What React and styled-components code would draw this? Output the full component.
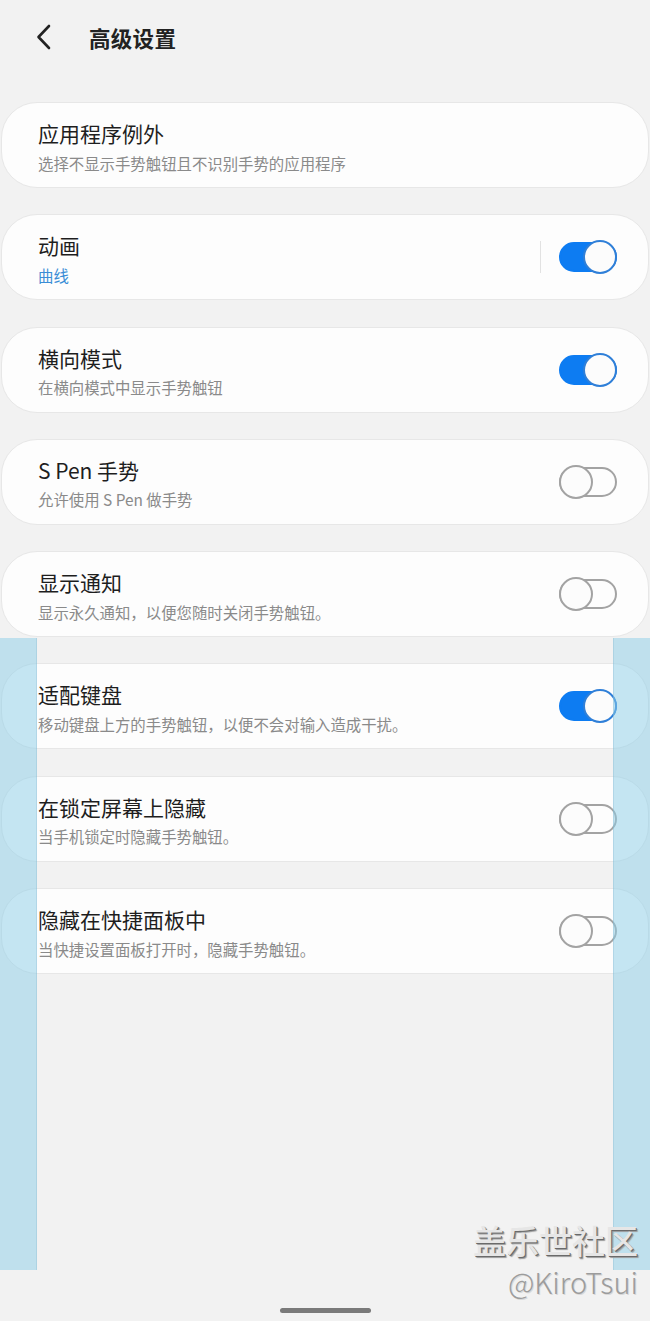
import styled, { createGlobalStyle } from "styled-components";

const GlobalStyle = createGlobalStyle`
  html, body {
    margin: 0;
    padding: 0;
    background: #f2f2f2;
  }
  body {
    font-family: "Noto Sans CJK SC", "Noto Sans", sans-serif;
  }
`;

const Screen = styled.div`
  position: relative;
  width: 650px;
  height: 1321px;
  overflow: hidden;
  background: #f2f2f2;
  display: flex;
  flex-direction: column;
`;

const Header = styled.header`
  height: 74px;
  display: flex;
  align-items: center;
  padding-left: 34px;
  box-sizing: border-box;
`;

const BackButton = styled.button`
  border: 0;
  background: none;
  padding: 0;
  width: 20px;
  height: 26px;
  display: flex;
  align-items: center;
  justify-content: center;
  cursor: pointer;
`;

const Title = styled.h1`
  margin: 0 0 0 35px;
  font-size: 21.5px;
  font-weight: 700;
  color: #222;
  letter-spacing: 0.3px;
`;

const List = styled.div`
  display: flex;
  flex-direction: column;
  gap: 26.3px;
  padding: 28px 1px 0 1px;
`;

const Card = styled.div`
  height: 86px;
  box-sizing: border-box;
  border-radius: 36px;
  background: #fdfdfd;
  border: 1px solid #e7e7e7;
  display: flex;
  align-items: center;
  padding: 0 31px 0 36px;
`;

const TextBlock = styled.div`
  flex: 1;
  align-self: flex-start;
  padding-top: 16px;
`;

const ItemTitle = styled.div`
  font-size: 21px;
  line-height: 28px;
  color: #1e1e1e;
`;

const ItemSub = styled.div`
  margin-top: 4.5px;
  font-size: 15.4px;
  line-height: 22px;
  color: ${(p) => (p.$accent ? "#3a8dd6" : "#8a8a8a")};
`;

const Divider = styled.div`
  width: 1px;
  height: 32px;
  background: #e2e2e2;
  margin-right: 18px;
`;

const Switch = styled.div`
  position: relative;
  width: 58px;
  height: 34px;
  flex-shrink: 0;
`;

const Track = styled.div`
  position: absolute;
  left: 0;
  right: 0;
  top: 2px;
  height: 30px;
  box-sizing: border-box;
  border-radius: 15px;
  background: ${(p) => (p.$on ? "#0d7cf2" : "transparent")};
  border: 2px solid ${(p) => (p.$on ? "#0d7cf2" : "#a3a3a3")};
`;

const Knob = styled.div`
  position: absolute;
  top: 0;
  ${(p) => (p.$on ? "right: 0;" : "left: 0;")}
  width: 34px;
  height: 34px;
  box-sizing: border-box;
  border-radius: 50%;
  background: #fcfcfc;
  border: 2px solid ${(p) => (p.$on ? "#2f7fd8" : "#a3a3a3")};
`;

const Overlay = styled.div`
  position: absolute;
  top: 638px;
  height: 632px;
  width: ${(p) => p.$w}px;
  ${(p) => (p.$side === "left" ? "left: 0;" : "right: 0;")}
  background: rgba(140, 205, 232, 0.5);
  ${(p) =>
    p.$side === "left"
      ? "border-right: 1px solid rgba(120, 170, 200, 0.25);"
      : "border-left: 1px solid rgba(120, 170, 200, 0.25);"}
`;

const Watermark = styled.div`
  position: absolute;
  right: 12px;
  bottom: 20px;
  text-align: right;
  font-family: "Noto Sans CJK SC", sans-serif;
  pointer-events: none;
`;

const MarkName = styled.div`
  font-size: 33px;
  line-height: 42px;
  font-weight: 500;
  color: #e6e6e6;
  text-shadow: 1px 1px 0 #6a6a6a, 2px 2px 1px #9a9a9a;
`;

const MarkUser = styled.div`
  font-size: 29px;
  line-height: 40px;
  font-weight: 300;
  color: #9c9c9c;
  text-shadow: 1px 1px 0 #d8d8d8;
  letter-spacing: 0;
`;

const HomeBar = styled.div`
  margin: auto auto 8px;
  width: 91px;
  height: 5px;
  border-radius: 3px;
  background: #7a7a7a;
`;

const Toggle = ({ on }) => (
  <Switch>
    <Track $on={on} />
    <Knob $on={on} />
  </Switch>
);

const items = [
  { title: "应用程序例外", sub: "选择不显示手势触钮且不识别手势的应用程序" },
  { title: "动画", sub: "曲线", accent: true, toggle: true, on: true, divider: true },
  { title: "横向模式", sub: "在横向模式中显示手势触钮", toggle: true, on: true },
  { title: "S Pen 手势", sub: "允许使用 S Pen 做手势", toggle: true, on: false },
  { title: "显示通知", sub: "显示永久通知，以便您随时关闭手势触钮。", toggle: true, on: false },
  { title: "适配键盘", sub: "移动键盘上方的手势触钮，以便不会对输入造成干扰。", toggle: true, on: true },
  { title: "在锁定屏幕上隐藏", sub: "当手机锁定时隐藏手势触钮。", toggle: true, on: false },
  { title: "隐藏在快捷面板中", sub: "当快捷设置面板打开时，隐藏手势触钮。", toggle: true, on: false },
];

export default function App() {
  return (
    <>
      <GlobalStyle />
      <Screen>
        <Header>
          <BackButton aria-label="返回">
            <svg width="18" height="26" viewBox="0 0 18 26" fill="none">
              <path d="M14 2 L3.5 13 L14 24" stroke="#222" strokeWidth="2.6" strokeLinecap="round" strokeLinejoin="round" />
            </svg>
          </BackButton>
          <Title>高级设置</Title>
        </Header>
        <List>
          {items.map((it) => (
            <Card key={it.title}>
              <TextBlock>
                <ItemTitle>{it.title}</ItemTitle>
                <ItemSub $accent={it.accent}>{it.sub}</ItemSub>
              </TextBlock>
              {it.divider && <Divider />}
              {it.toggle && <Toggle on={it.on} />}
            </Card>
          ))}
        </List>
        <HomeBar />
        <Overlay $side="left" $w={36} />
        <Overlay $side="right" $w={36} />
        <Watermark>
          <MarkName>盖乐世社区</MarkName>
          <MarkUser>@KiroTsui</MarkUser>
        </Watermark>
      </Screen>
    </>
  );
}
